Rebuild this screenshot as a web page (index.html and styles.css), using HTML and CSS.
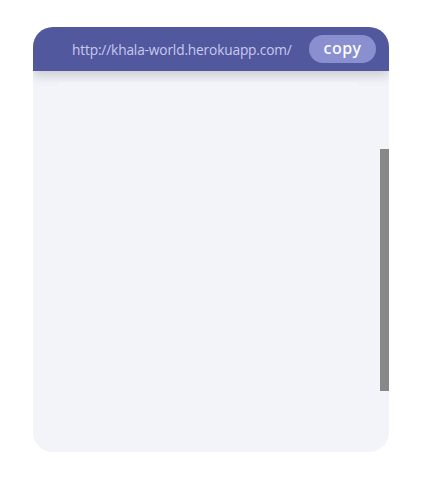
FILE: index.html
```html
<!DOCTYPE html>
<html>
<head>
<meta charset="utf-8">
<link rel="stylesheet" href="styles.css">
</head>
<body>
<div class="card">
  <div class="bar">
    <span class="url">http://khala-world.herokuapp.com/</span>
    <button class="copy">copy</button>
  </div>
  <div class="body">
    <div class="inner"></div>
  </div>
  <div class="thumb"></div>
</div>
</body>
</html>
```
FILE: styles.css
```css
html, body { margin: 0; padding: 0; background: #fff; }
.card {
  position: relative;
  margin: 27px 0 0 33px;
  width: 356px;
  height: 425px;
  background: #f3f4f9;
  border-radius: 20px;
  overflow: hidden;
  display: flex;
  flex-direction: column;
}
.bar {
  position: relative;
  z-index: 1;
  height: 44px;
  flex: none;
  background: #52589e;
  display: flex;
  align-items: center;
  justify-content: space-between;
  padding: 0 13px 0 39px;
  box-shadow: 0 5px 10px rgba(0,0,0,0.16);
}
.url {
  font-family: "Open Sans", "Noto Sans", sans-serif;
  font-size: 13.7px;
  color: #c9c9ef;
  letter-spacing: -0.15px;
}
.copy {
  width: 67px;
  height: 28px;
  border: none;
  border-radius: 14px;
  background: #8a8fd0;
  color: #fff;
  font-family: "Noto Sans", sans-serif;
  font-weight: 500;
  font-size: 16px;
  padding: 0 0 3px;
  letter-spacing: 0.6px;
}
.body { flex: 1; padding: 11px 31px 0 25px; display: flex; }
.inner { flex: 1; position: relative; z-index: 2; background: #f3f4f9; }
.thumb {
  position: absolute;
  z-index: 3;
  right: 0;
  top: 122px;
  width: 9px;
  height: 242px;
  background: #888;
}
```
